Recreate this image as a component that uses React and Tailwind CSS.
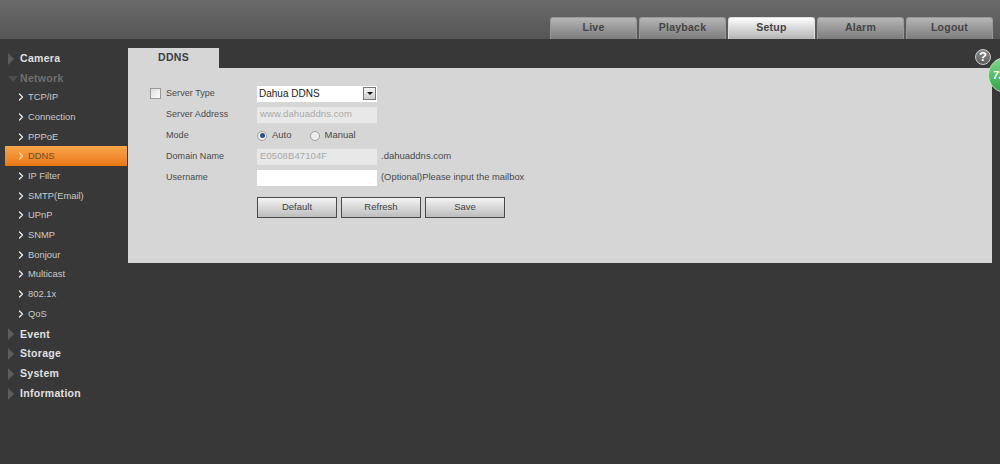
import { ChevronRight } from 'lucide-react'

const FONT = "font-['Liberation_Sans',Arial,sans-serif]"

const TABS = ['Live', 'Playback', 'Setup', 'Alarm', 'Logout']

const MENU = [
  { label: 'Camera', type: 'group' },
  { label: 'Network', type: 'open' },
  { label: 'TCP/IP' },
  { label: 'Connection' },
  { label: 'PPPoE' },
  { label: 'DDNS', active: true },
  { label: 'IP Filter' },
  { label: 'SMTP(Email)' },
  { label: 'UPnP' },
  { label: 'SNMP' },
  { label: 'Bonjour' },
  { label: 'Multicast' },
  { label: '802.1x' },
  { label: 'QoS' },
  { label: 'Event', type: 'group' },
  { label: 'Storage', type: 'group' },
  { label: 'System', type: 'group' },
  { label: 'Information', type: 'group' },
]

function MenuRow({ item }) {
  if (item.type === 'group' || item.type === 'open') {
    const open = item.type === 'open'
    return (
      <div className="flex h-[19.7px] items-center pl-2 pt-[2px]">
        <span className="flex w-[12px] shrink-0">
          {open ? (
            <span className="h-0 w-0 border-x-[5px] border-t-[6px] border-x-transparent border-t-[#4d4d4d]" />
          ) : (
            <span className="h-0 w-0 border-y-[6px] border-l-[6px] border-y-transparent border-l-[#5c5c5c]" />
          )}
        </span>
        <span className={`text-[10.5px] font-bold tracking-[0.3px] ${open ? 'text-[#707070]' : 'text-[#e0e0e0]'}`}>
          {item.label}
        </span>
      </div>
    )
  }
  return (
    <div
      className={`ml-[5px] mr-px flex h-[19.7px] items-center pl-[10px] text-[9.4px] ${
        item.active ? 'bg-gradient-to-b from-[#f9a64a] to-[#e9780f] text-[#6b4d22]' : 'text-[#c8c8c8]'
      }`}
    >
      <ChevronRight size={12} strokeWidth={2.5} className={`shrink-0 ${item.active ? 'text-[#ffd9a8]' : 'text-[#eee]'}`} />
      <span className="ml-px">{item.label}</span>
    </div>
  )
}

function FormRow({ label, children, check }) {
  return (
    <div className="flex h-[21px] items-center">
      <span className="-ml-px flex w-[16px] shrink-0 items-center">
        {check && <span className="h-[11px] w-[11px] border border-[#999] bg-gradient-to-br from-[#ddd] to-[#fff]" />}
      </span>
      <span className="w-[91px] shrink-0 pt-px text-[9px] tracking-[0.05px] text-[#4a4a4a]">{label}</span>
      {children}
    </div>
  )
}

function DisabledInput({ value }) {
  return (
    <div className="flex h-[16px] w-[120px] items-center bg-[#e8e8e8] pl-[3px] text-[9.5px] tracking-[0.1px] text-[#a8a8a8]">
      {value}
    </div>
  )
}

function Radio({ checked, label }) {
  return (
    <span className="flex items-center">
      <span className="flex h-[10px] w-[10px] items-center justify-center rounded-full border border-[#a0a0a0] bg-[#eee]">
        {checked && <span className="h-[5px] w-[5px] rounded-full bg-[#24558f]" />}
      </span>
      <span className="ml-[5px] text-[9.5px] text-[#4a4a4a]">{label}</span>
    </span>
  )
}

function FormButton({ children }) {
  return (
    <button className="h-[21px] w-[80px] border border-[#4a4a4a] bg-gradient-to-b from-[#f4f4f4] to-[#bdbdbd] text-[9.5px] text-[#444]">
      {children}
    </button>
  )
}

export default function App() {
  return (
    <div className={`relative h-[464px] w-[1000px] overflow-hidden bg-[#383838] ${FONT}`}>
      {/* top bar */}
      <header className="flex h-[39px] items-end justify-end bg-gradient-to-b from-[#6a6a6a] to-[#565656] pr-[7px]">
        <div className="flex gap-[2px]">
          {TABS.map(t => (
            <div
              key={t}
              className={`flex h-[22px] w-[87px] items-center justify-center rounded-t-[3px] border-x border-t pb-[2px] text-[10.5px] font-bold tracking-[0.25px] ${
                t === 'Setup'
                  ? 'border-[#ddd] bg-gradient-to-b from-[#fdfdfd] to-[#b4b4b4] text-[#444]'
                  : 'border-[#999] bg-gradient-to-b from-[#b5b5b5] to-[#7d7d7d] text-[#444]'
              }`}
            >
              {t}
            </div>
          ))}
        </div>
      </header>

      <div className="flex">
        <aside className="w-[128px] shrink-0 pt-[9px]">
          {MENU.map(item => (
            <MenuRow key={item.label} item={item} />
          ))}
        </aside>

        <main className="w-[864px] pt-[9px]">
          <div className="flex h-[20px] w-[91px] items-center justify-center bg-[#d6d6d6] text-[10.5px] font-bold tracking-[0.3px] text-[#3c3c3c]">
            DDNS
          </div>
          <div className="h-[195px] bg-[#d6d6d6] pl-[23px] pt-[15px]">
            <FormRow label="Server Type" check>
              <div className="flex h-[16px] w-[120px] items-center justify-between bg-white pl-[2px] pr-px text-[10px] text-[#222]">
                Dahua DDNS
                <span className="flex h-[13px] w-[13px] items-center justify-center border border-[#777] bg-gradient-to-b from-[#f5f5f5] to-[#ccc]">
                  <span className="h-0 w-0 border-x-[3px] border-t-[3px] border-x-transparent border-t-[#111]" />
                </span>
              </div>
            </FormRow>
            <FormRow label="Server Address">
              <DisabledInput value="www.dahuaddns.com" />
            </FormRow>
            <FormRow label="Mode">
              <div className="flex gap-[18px]">
                <Radio checked label="Auto" />
                <Radio label="Manual" />
              </div>
            </FormRow>
            <FormRow label="Domain Name">
              <DisabledInput value="E0508B47104F" />
              <span className="ml-[4px] text-[9.5px] text-[#4a4a4a]">.dahuaddns.com</span>
            </FormRow>
            <FormRow label="Username">
              <div className="h-[16px] w-[120px] bg-white" />
              <span className="ml-[4px] text-[9.4px] text-[#4a4a4a]">(Optional)Please input the mailbox</span>
            </FormRow>
            <div className="ml-[106px] mt-[9px] flex gap-[4px]">
              <FormButton>Default</FormButton>
              <FormButton>Refresh</FormButton>
              <FormButton>Save</FormButton>
            </div>
          </div>
        </main>
      </div>

      {/* help icon */}
      <div className="absolute left-[975px] top-[49px] flex h-[16px] w-[16px] items-center justify-center rounded-full border border-[#ccc] bg-gradient-to-b from-[#8a8a8a] to-[#5e5e5e] text-[13px] font-bold text-white">
        ?
      </div>
      {/* floating green badge */}
      <div className="absolute left-[988px] top-[57px] flex h-[36px] w-[36px] items-center rounded-full border border-[#bfe8c4] bg-gradient-to-b from-[#7fd88a] to-[#2fa44a] pl-[4px] text-[10px] font-bold italic text-white">
        73
      </div>
    </div>
  )
}
